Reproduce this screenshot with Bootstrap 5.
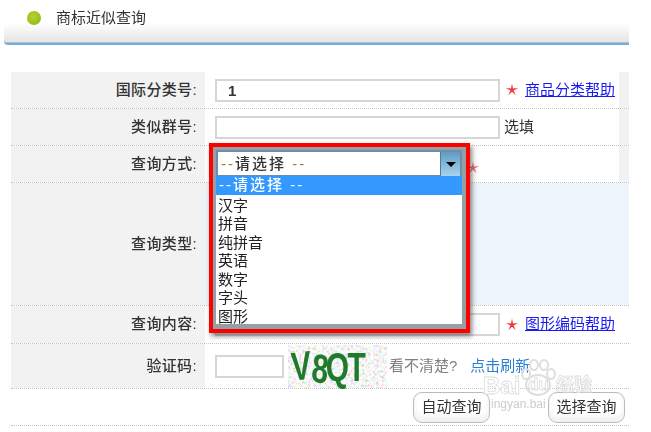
<!DOCTYPE html>
<html lang="zh-CN">
<head>
  <meta charset="UTF-8" />
  <meta name="viewport" content="width=device-width, initial-scale=1.0"/>
  <title>商标近似查询</title>
  <link href="https://cdn.jsdelivr.net/npm/bootstrap@5.3.0/dist/css/bootstrap.min.css" rel="stylesheet"/>
  <style>
    body {
      background: #fff;
      font-family: "Liberation Sans", "Noto Sans CJK SC", sans-serif;
      font-size: 15px;
      color: #333;
      overflow: hidden;
    }
    .sheet {
      position: relative;
      width: 651px;
      height: 432px;
      filter: blur(0.5px);
    }
    .top-bar {
      height: 45px;
      margin: 0 22px 0 4px;
      padding-left: 23px;
      gap: 15px;
      background: linear-gradient(#fff 55%, #e6e6e6 94%);
      border-bottom: 2px solid #6bb1e0;
      box-shadow: inset 0 -1px #bdbdbd;
      border-radius: 0 0 0 4px;
    }
    .top-bar span { position: relative; top: -3px; }
    .dot {
      position: relative;
      top: -4px;
      width: 14px;
      height: 14px;
      border-radius: 50%;
      background: radial-gradient(circle at 45% 40%, #b4d335, #8db30f);
    }
    .form-box { margin: 27px 22px 0 11px; }
    .line { border-bottom: 1px dotted #c4c4c4; }
    .lbl {
      width: 194px;
      flex: none;
      background: #f2f2f2;
      padding-right: 8px;
      letter-spacing: .35px;
      font-weight: 500;
    }
    .val { padding-left: 10px; gap: 5px; white-space: nowrap; }
    .gutter { width: 10px; flex: none; background: #f2f2f2; }
    .h-a { height: 37px; }
    .h-b { height: 123px; }
    .h-c { height: 38px; }
    .h-d { height: 45px; }
    .bluish { background: #edf4fb; }
    .txt-input {
      width: 285px;
      flex: none;
      height: 23px;
      padding: 0 11px;
      border: 2px solid #d6d6d6;
      border-radius: 0;
      font-size: 15px;
      font-weight: 700;
      color: #333;
    }
    .txt-input.short { width: 69px; }
    .star { flex: none; }
    .star-under { margin: 7px 0 0 251px; }
    .star-under use { opacity: .75; }
    .help { color: #1a1af0; margin-left: 1px; }
    .fill-note { margin-left: -1px; }
    .noise-pic { margin-left: -1px; flex: none; overflow: visible; }
    .grey-tip { color: #808080; margin-left: -3px; }
    .refresh { color: #2a7fd4; margin-left: 8px; }
    .act-btn {
      width: 77px;
      height: 31px;
      padding: 0;
      font-size: 15px;
      color: #333;
      background: #fff;
      border: 1px solid #bbb;
      border-radius: 9px;
      box-shadow: inset 0 -5px 6px #f0f0f0;
    }
    .act-row { padding-left: 402px; gap: 58px; }
    .drop-frame {
      position: absolute;
      left: 209px;
      top: 143px;
      width: 261px;
      height: 190px;
      border: 4px solid #f00;
      background: #93a0a6;
      padding: 3px;
      box-shadow: 2px 3px 5px rgba(60, 60, 60, .65);
    }
    .drop-select {
      height: 26px;
      width: 246px;
      background: #fff;
      border: 2px solid #6f8ea6;
      border-bottom-width: 1px;
      padding: 1px 0 0 3px;
    }
    .drop-arrow {
      width: 20px;
      height: 24px;
      margin-left: auto;
      background: linear-gradient(#5f9cc6, #a9d3ee);
      border-left: 1px solid #547d9c;
    }
    .drop-arrow i {
      width: 0;
      height: 0;
      border: 5px solid transparent;
      border-top: 5px solid #000;
      border-bottom: 0;
    }
    .drop-list {
      width: 246px;
      height: 148px;
      background: #fff;
      line-height: 18.6px;
      padding: 0 0 0 2px;
      margin: 0;
      list-style: none;
      color: #222;
    }
    .drop-list .on {
      background: #3399ff;
      color: #fff;
      margin-left: -2px;
      padding-left: 3px;
      height: 19px;
      margin-bottom: 1.5px;
    }
    .dash { letter-spacing: 2px; font-weight: 500; }
    .drop-select .dash { color: #333; }
    .drop-select .dash span { color: #a57b2c; }
    .stamp {
      position: absolute;
      left: 482px;
      top: 358px;
      width: 130px;
      height: 55px;
      pointer-events: none;
      color: #fff;
      -webkit-text-stroke: .8px #dcdcdc;
    }
    .stamp b { position: absolute; left: 1px; top: 14px; font-size: 24px; line-height: 28px; font-weight: 700; }
    .stamp i { position: absolute; left: 46px; top: 17px; font-size: 17px; line-height: 20px; font-style: normal; font-weight: 700; }
    .stamp em { position: absolute; left: 74px; top: 16px; font-size: 18px; line-height: 22px; font-style: normal; font-weight: 700; }
    .stamp u { position: absolute; left: 9px; top: 39px; font-size: 12px; line-height: 14px; text-decoration: none; color: #ccc; -webkit-text-stroke: 0; }
    .stamp svg { position: absolute; left: 36px; top: 0; }
  </style>
</head>
<body>

<svg width="0" height="0" class="position-absolute">
  <symbol id="redStar" viewBox="0 0 14 14">
    <polygon fill="#f4343f" points="7,0.5 8,5.6 13.2,5 8.6,7.5 10.8,12.3 7,8.7 3.2,12.3 5.4,7.5 0.8,5 6,5.6"/>
  </symbol>
</svg>

<div class="sheet">
  <div class="top-bar d-flex align-items-center">
    <div class="dot"></div>
    <span>商标近似查询</span>
  </div>

  <div class="form-box">
    <div class="line d-flex h-a">
      <div class="lbl d-flex align-items-center justify-content-end">国际分类号:</div>
      <div class="val flex-grow-1 d-flex align-items-center">
        <input class="form-control txt-input" type="text" value="1"/>
        <svg class="star" width="14" height="14"><use href="#redStar"/></svg>
        <a href="#" class="help">商品分类帮助</a>
      </div>
      <div class="gutter"></div>
    </div>
    <div class="line d-flex h-a">
      <div class="lbl d-flex align-items-center justify-content-end">类似群号:</div>
      <div class="val flex-grow-1 d-flex align-items-center">
        <input class="form-control txt-input" type="text"/>
        <span class="fill-note">选填</span>
      </div>
      <div class="gutter"></div>
    </div>
    <div class="line d-flex h-a">
      <div class="lbl d-flex align-items-center justify-content-end">查询方式:</div>
      <div class="val flex-grow-1 d-flex align-items-center">
        <svg class="star star-under" width="14" height="14"><use href="#redStar"/></svg>
      </div>
      <div class="gutter"></div>
    </div>
    <div class="line d-flex h-b">
      <div class="lbl d-flex align-items-center justify-content-end">查询类型:</div>
      <div class="bluish flex-grow-1"></div>
    </div>
    <div class="line d-flex h-c">
      <div class="lbl d-flex align-items-center justify-content-end">查询内容:</div>
      <div class="val flex-grow-1 d-flex align-items-center">
        <input class="form-control txt-input" type="text"/>
        <svg class="star" width="14" height="14"><use href="#redStar"/></svg>
        <a href="#" class="help">图形编码帮助</a>
      </div>
    </div>
    <div class="line d-flex h-d">
      <div class="lbl d-flex align-items-center justify-content-end">验证码:</div>
      <div class="val flex-grow-1 d-flex align-items-center">
        <input class="form-control txt-input short" type="text"/>
        <svg class="noise-pic" width="99" height="43" viewBox="0 0 99 43">
          <filter id="noise" x="0" y="0" width="100%" height="100%">
            <feTurbulence type="fractalNoise" baseFrequency="0.35" numOctaves="2" seed="7"/>
            <feColorMatrix type="matrix" values="1.5 0 0 0 0.2  0 1.5 0 0 0.2  0 0 1.5 0 0.2  0 0 0 0 1"/>
          </filter>
          <rect width="99" height="43" filter="url(#noise)"/>
          <text transform="translate(4 36) scale(1 1.35)" font-size="30" font-weight="700" fill="#1f7a2e" letter-spacing="-1.5" rotate="-5 8 0 0" font-family="'Liberation Sans', sans-serif">V8QT</text>
        </svg>
        <span class="grey-tip">看不清楚?</span>
        <a href="#" class="refresh text-decoration-none">点击刷新</a>
      </div>
    </div>
    <div class="line d-flex h-a align-items-center act-row">
      <button type="button" class="btn act-btn">自动查询</button>
      <button type="button" class="btn act-btn">选择查询</button>
    </div>
  </div>

  <div class="stamp">
    <svg width="40" height="40" viewBox="0 0 40 40" fill="none" stroke="#dedede" stroke-width="2">
      <ellipse cx="20" cy="27" rx="12" ry="10"/>
      <ellipse cx="8" cy="16" rx="4" ry="5"/>
      <ellipse cx="16" cy="7" rx="4" ry="5"/>
      <ellipse cx="26" cy="7" rx="4" ry="5"/>
      <ellipse cx="33" cy="16" rx="4" ry="5"/>
    </svg>
    <b>Bai</b><i>du</i><em>经验</em><u>ingyan.bai</u>
  </div>

  <div class="drop-frame">
    <div class="drop-select d-flex align-items-center">
      <span class="dash"><span>--</span>请选择 <span>--</span></span>
      <div class="drop-arrow d-flex align-items-center justify-content-center"><i></i></div>
    </div>
    <ul class="drop-list">
      <li class="on dash">--请选择 --</li>
      <li>汉字</li>
      <li>拼音</li>
      <li>纯拼音</li>
      <li>英语</li>
      <li>数字</li>
      <li>字头</li>
      <li>图形</li>
    </ul>
  </div>
</div>

</body>
</html>
